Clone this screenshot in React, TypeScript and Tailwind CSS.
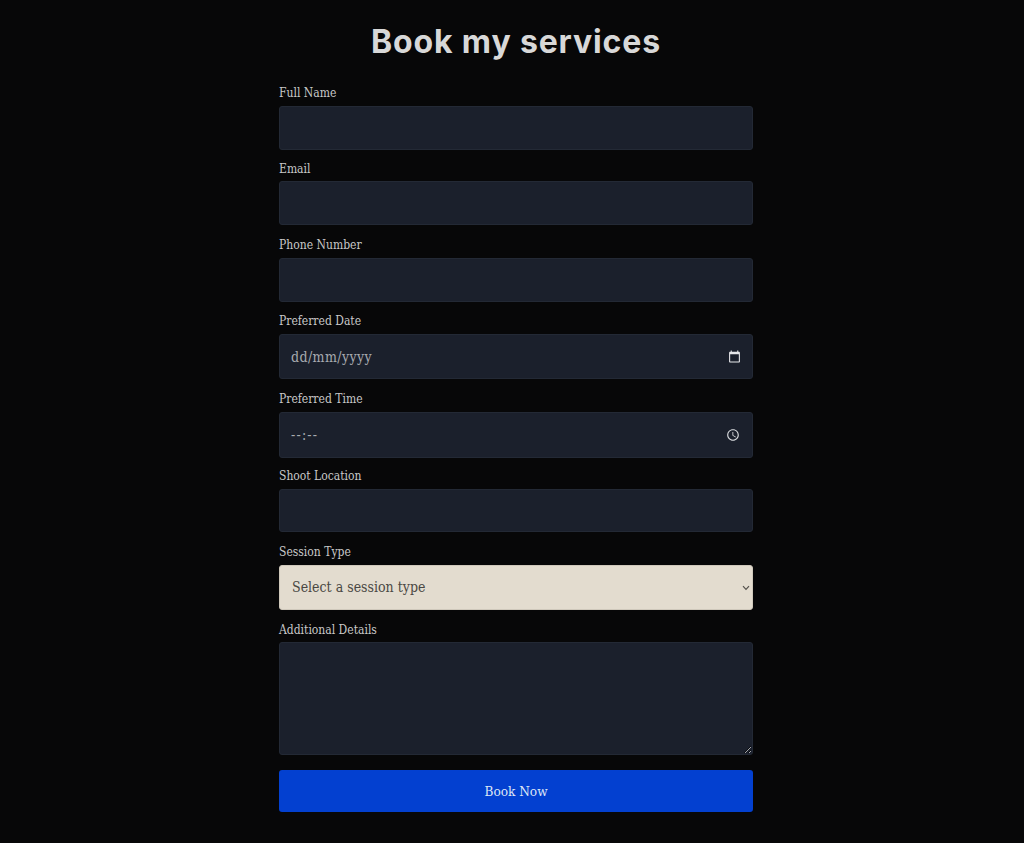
const slab = "font-['DejaVu_Serif_Condensed','DejaVu_Serif',serif]";

const labelClass = "block h-[14px] text-[12px] leading-[14px] text-[#c9c9c9]";
const inputClass =
  "block w-full rounded-[3px] border border-[#232935] bg-[#1b202c] px-[11px] text-[14px] text-[#b4b8bf] placeholder:text-[#a8abb0] outline-none font-['DejaVu_Serif_Condensed','DejaVu_Serif',serif]";

export default function App() {
  return (
    <div className={`min-h-[843px] bg-[#070708] ${slab}`}>
      <div className="mx-auto w-[474px] translate-x-[4px] pt-[20px]">
        <h1 className="mb-[22px] h-[44px] text-center font-['Inter',sans-serif] text-[32px] font-bold leading-[44px] tracking-[0.85px] text-[#d8d8d8]">
          Book my services
        </h1>
        <form>
          <div className="mb-[12px]">
            <label className={`${labelClass} mb-[6px]`}>Full Name</label>
            <input type="text" className={`${inputClass} h-[44px]`} />
          </div>
          <div className="mb-[13px]">
            <label className={`${labelClass} mb-[5px]`}>Email</label>
            <input type="text" className={`${inputClass} h-[44px]`} />
          </div>
          <div className="mb-[12px]">
            <label className={`${labelClass} mb-[6px]`}>Phone Number</label>
            <input type="text" className={`${inputClass} h-[44px]`} />
          </div>
          <div className="mb-[13px]">
            <label className={`${labelClass} mb-[6px]`}>Preferred Date</label>
            <div className="relative">
              <input type="text" placeholder="dd/mm/yyyy" className={`${inputClass} h-[45px] tracking-[0.4px]`} />
              <svg viewBox="0 0 24 24" className="absolute right-[12px] top-[16px] h-[13px] w-[13px] fill-[#e6e7ea]">
                <path d="M20 3h-1V1h-2v2H7V1H5v2H4c-1.1 0-2 .9-2 2v16c0 1.1.9 2 2 2h16c1.1 0 2-.9 2-2V5c0-1.1-.9-2-2-2zm0 18H4V8h16v13z" />
              </svg>
            </div>
          </div>
          <div className="mb-[11px]">
            <label className={`${labelClass} mb-[6px]`}>Preferred Time</label>
            <div className="relative">
              <input type="text" placeholder="--:--" className={`${inputClass} h-[46px] tracking-[1.2px]`} />
              <svg viewBox="0 0 24 24" className="absolute right-[13px] top-[16px] h-[14px] w-[14px] fill-[#d8dadd]">
                <path d="M11.99 2C6.47 2 2 6.48 2 12s4.47 10 9.99 10C17.52 22 22 17.52 22 12S17.52 2 11.99 2zM12 20c-4.42 0-8-3.58-8-8s3.58-8 8-8 8 3.58 8 8-3.58 8-8 8z" />
                <path d="M12.5 7H11v6l5.25 3.15.75-1.23-4.5-2.67z" />
              </svg>
            </div>
          </div>
          <div className="mb-[13px]">
            <label className={`${labelClass} mb-[6px]`}>Shoot Location</label>
            <input type="text" className={`${inputClass} h-[43px]`} />
          </div>
          <div className="mb-[13px]">
            <label className={`${labelClass} mb-[6px]`}>Session Type</label>
            <div className="relative">
              <select className="block h-[45px] w-full appearance-none rounded-[3px] border border-[#cfc8bb] bg-[#e3dccf] px-3 text-[14px] text-[#4a4844] outline-none">
                <option>Select a session type</option>
              </select>
              <svg viewBox="0 0 8 6" className="absolute right-[3px] top-[20px] h-[6px] w-[8px] fill-none stroke-[#55524d] stroke-[1.2]">
                <path d="M1 1.2 4 4.4 7 1.2" />
              </svg>
            </div>
          </div>
          <div className="mb-[15px]">
            <label className={`${labelClass} mb-[5px]`}>Additional Details</label>
            <textarea className={`${inputClass} h-[113px] py-2`} />
          </div>
          <button type="button" className="block h-[42px] w-full rounded-[3px] bg-[#0340d0] text-[13.5px] text-[#dfe6f5]">
            Book Now
          </button>
        </form>
      </div>
    </div>
  );
}
